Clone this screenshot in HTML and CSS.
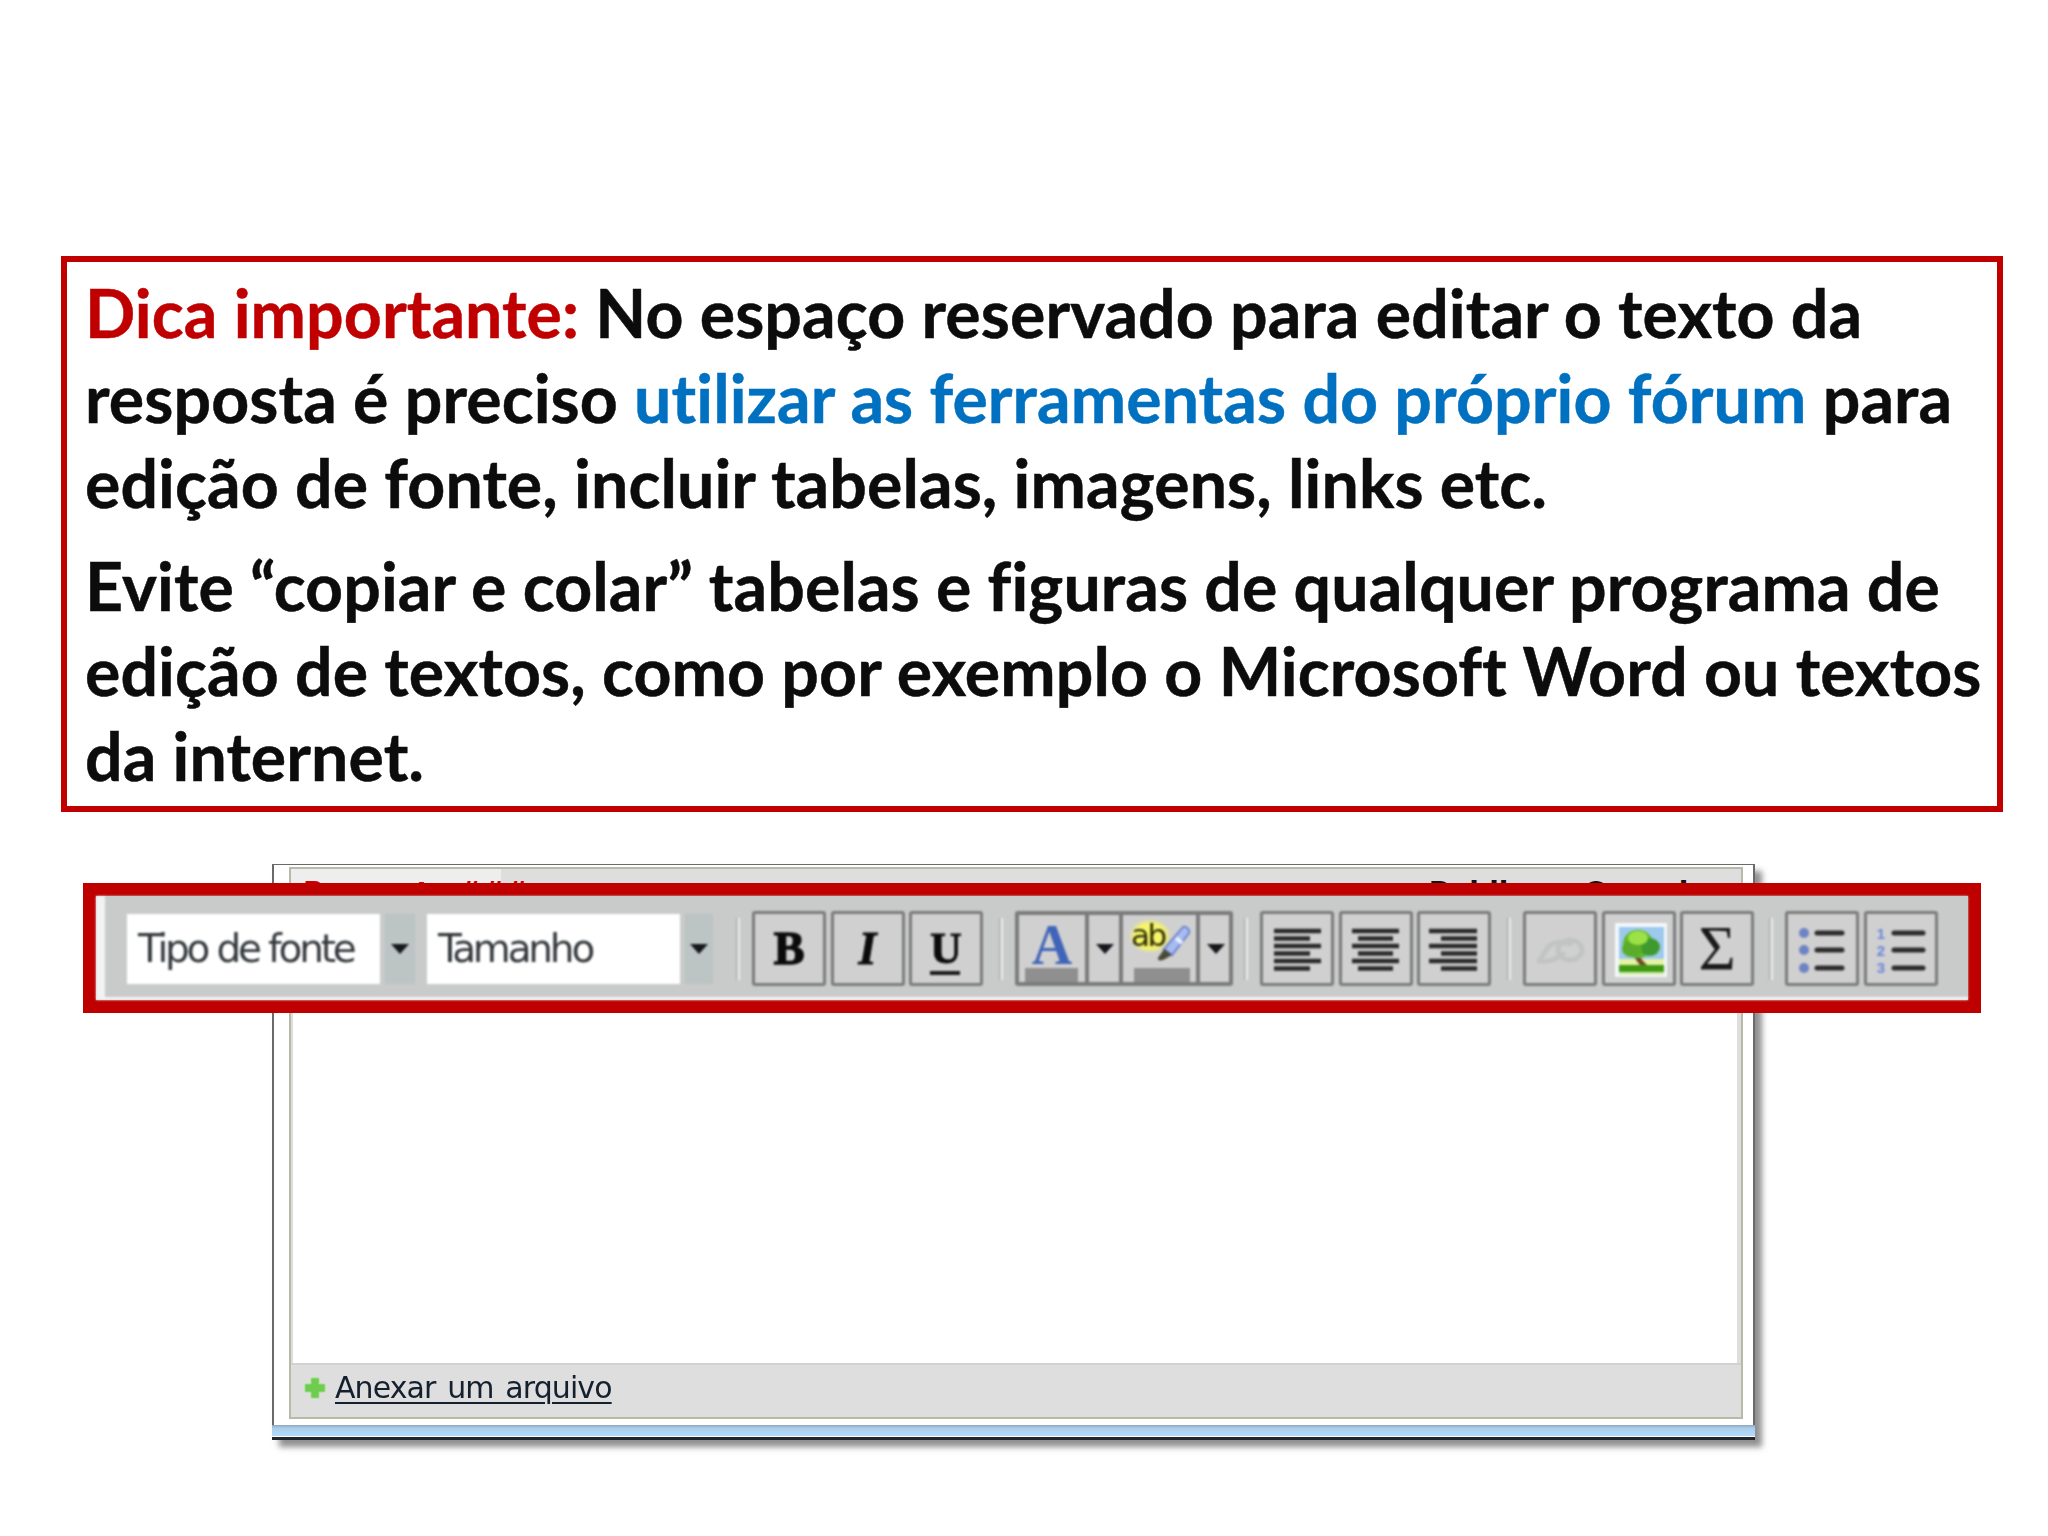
FILE: index.html
```html
<!DOCTYPE html>
<html lang="pt-BR">
<head>
<meta charset="utf-8">
<title>Dica importante</title>
<link rel="stylesheet" href="styles.css">
</head>
<body>
<main class="slide">
  <section class="callout">
    <p class="tip"><span class="red">Dica importante:</span> No espaço reservado para editar o texto da<br>resposta é preciso <span class="blue">utilizar as ferramentas do próprio fórum</span> para<br>edição de fonte, incluir tabelas, imagens, links etc.</p>
    <p class="tip">Evite “copiar e colar” tabelas e figuras de qualquer programa de<br>edição de textos, como por exemplo o Microsoft Word ou textos<br>da internet.</p>
  </section>

  <section class="demo">
    <div class="window">
      <div class="frame">
        <div class="tabs">
          <div class="tab">Resposta ###</div>
          <div class="actions"><span>Publicar</span><span>Cancelar</span></div>
        </div>
        <div class="textarea"></div>
        <div class="attach">
          <svg class="plus" viewBox="0 0 22 22"><path d="M8 1h6a1 1 0 0 1 1 1v5h5a1 1 0 0 1 1 1v6a1 1 0 0 1-1 1h-5v5a1 1 0 0 1-1 1H8a1 1 0 0 1-1-1v-5H2a1 1 0 0 1-1-1V8a1 1 0 0 1 1-1h5V2a1 1 0 0 1 1-1z" fill="#6fcc50" stroke="#9be085" stroke-width="1"/></svg>
          <a class="attach-link">Anexar um arquivo</a>
        </div>
      </div>
      <div class="statusbar"></div>
    </div>

    <div class="highlight">
      <div class="toolbar">
        <div class="combos">
          <div class="combo"><div class="field">Tipo de fonte</div><div class="drop"><i class="caret"></i></div></div>
          <div class="combo"><div class="field">Tamanho</div><div class="drop drop-narrow"><i class="caret"></i></div></div>
        </div>
        <i class="sep sep-a"></i>
        <div class="group">
          <div class="btn"><span class="glyph g-b">B</span></div>
          <div class="btn"><span class="glyph g-i">I</span></div>
          <div class="btn g-u-wrap"><span class="glyph g-u">U</span></div>
        </div>
        <i class="sep"></i>
        <div class="split">
          <div class="cell cell-a"><span class="glyph g-a">A</span><i class="swatch"></i></div>
          <div class="cell cell-drop"><i class="caret"></i></div>
          <div class="cell cell-hl">
            <span class="glow"></span><span class="g-ab">ab</span>
            <svg class="pencil" viewBox="0 0 34 40"><path d="M26 2c3-1 7 2 6 6L15 30l-8-6z" fill="#a9bcf0" stroke="#6d86d0" stroke-width="2"/><path d="M19 13l6 5" stroke="#eef2ff" stroke-width="4"/><path d="M7 24l8 6-7 4c-3 2-8 2-7-1 1-2 4-5 6-9z" fill="#4a4a3a"/></svg>
            <i class="swatch"></i>
          </div>
          <div class="cell cell-drop last"><i class="caret"></i></div>
        </div>
        <i class="sep sep-b"></i>
        <div class="group">
          <div class="btn"><svg class="ico" viewBox="0 0 74 75"><path class="ln" d="M14 20h47M14 27.500h36M14 35h47M14 42.500h36M14 50h47M14 57.500h36"/></svg></div>
          <div class="btn"><svg class="ico" viewBox="0 0 74 75"><path class="ln" d="M13 20h47M19 27.500h35M13 35h47M19 42.500h35M13 50h47M19 57.500h35"/></svg></div>
          <div class="btn"><svg class="ico" viewBox="0 0 74 75"><path class="ln" d="M12 20h48M24 27.500h36M12 35h48M24 42.500h36M12 50h48M24 57.500h36"/></svg></div>
        </div>
        <i class="sep"></i>
        <div class="group">
          <div class="btn"><svg class="ico" viewBox="0 0 74 75"><g fill="none" stroke="#c2c4c4" stroke-width="5" stroke-linecap="round"><ellipse cx="47" cy="39" rx="12" ry="10"/><path d="M16 50l9-14c5-5 13-6 22-3"/><path d="M17 50c8 1 16-1 23-7"/></g></svg></div>
          <div class="btn"><svg class="ico" viewBox="0 0 74 75">
            <rect x="13" y="12" width="52" height="54" fill="#f2f8fd"/>
            <rect x="17" y="16" width="45" height="38" fill="#9dc9ec"/>
            <rect x="17" y="48" width="45" height="7" fill="#e6f2a6"/>
            <rect x="17" y="54" width="45" height="7" fill="#3f9a12"/>
            <rect x="17" y="61" width="45" height="3" fill="#d6ecb0"/>
            <path d="M31 43l5-1c2 5 5 8 9 12h-7c-3-3-5-7-7-11z" fill="#6f4a28"/>
            <ellipse cx="36" cy="33" rx="15" ry="14" fill="#62b82a"/>
            <ellipse cx="48" cy="36" rx="10" ry="9" fill="#3f9a2e"/>
            <ellipse cx="30" cy="38" rx="10" ry="8" fill="#59ad28"/>
            <ellipse cx="36" cy="27" rx="10" ry="7" fill="#9ce246"/>
          </svg></div>
          <div class="btn"><span class="glyph g-sigma">Σ</span></div>
        </div>
        <i class="sep sep-c"></i>
        <div class="group group-lists">
          <div class="btn"><svg class="ico" viewBox="0 0 74 75"><g fill="#6d83c4"><circle cx="19" cy="22" r="5"/><circle cx="19" cy="39" r="5"/><circle cx="19" cy="57" r="5"/></g><path class="ln-thick" d="M32 22h25M32 39h25M32 57h25"/></svg></div>
          <div class="btn"><svg class="ico" viewBox="0 0 74 75"><g class="nums"><text x="17" y="28">1</text><text x="17" y="45">2</text><text x="17" y="62">3</text></g><path class="ln-thick" d="M30 22h29M30 39h29M30 57h29"/></svg></div>
        </div>
      </div>
    </div>
  </section>
</main>
</body>
</html>
```

FILE: styles.css
```css
* { box-sizing: border-box; }
html, body { margin: 0; padding: 0; background: #fff; }
body { width: 2048px; height: 1536px; overflow: hidden; }

.slide { padding: 256px 45px 0 61px; }

/* Callout */
.callout {
  width: 1942px;
  height: 556px;
  border: 6px solid #c00000;
  padding: 8px 0 0 18px;
  font-family: "Lato", "Liberation Sans", sans-serif;
  font-weight: 700;
  font-size: 66.2px;
  line-height: 85px;
  letter-spacing: .1px;
  font-variant-ligatures: none;
  color: #0c0c0c;
  white-space: nowrap;
  -webkit-text-stroke: .5px currentColor;
}
.tip { margin: 0 0 18px; }
.red { color: #c00000; }
.blue { color: #0070c0; }

/* Screenshot of the editor */
.demo {
  position: relative;
  width: 1483px;
  height: 576px;
  margin: 52px 0 0 211px;
}
.window {
  height: 576px;
  display: flex;
  flex-direction: column;
  background: #fff;
  border: 1px solid #6a6a6a;
  border-width: 1px 2px 0 2px;
  padding-top: 2px;
  box-shadow: 7px 7px 6px rgba(70, 70, 70, .6);
  filter: blur(.5px);
}
.frame {
  flex: 1;
  display: flex;
  flex-direction: column;
  margin: 0 10px 0 15px;
  border: 2px solid #b9b9a8;
  background: #dededf;
  padding: 0 4px 0 2px;
}
.tabs { display: flex; height: 60px; }
.tab {
  width: 210px;
  margin-left: -2px;
  padding: 6px 0 0 12px;
  background: #eeeeef;
  color: #cc0000;
  font: 700 28px/36px "DejaVu Sans", sans-serif;
  white-space: nowrap;
}
.actions {
  flex: 1;
  display: flex;
  gap: 26px;
  justify-content: flex-end;
  padding: 6px 16px 0 0;
  color: #111;
  font: 700 28px/36px "DejaVu Sans", sans-serif;
}
.textarea { flex: 1; background: #fff; }
.attach {
  height: 54px;
  margin: 0 -4px 0 -2px;
  padding: 0 0 6px 13px;
  display: flex;
  align-items: center;
  gap: 9px;
  border-top: 2px solid #d2d2d2;
  background: #dededf;
}
.plus { width: 22px; height: 22px; }
.attach-link {
  font: 400 30px/34px "DejaVu Sans", sans-serif;
  letter-spacing: -.9px;
  word-spacing: 3px;
  color: #15202e;
  text-decoration: underline;
  text-underline-offset: 4px;
  text-decoration-thickness: 2px;
}
.statusbar {
  flex: none;
  height: 15px;
  margin: 6px -2px 0;
  border-bottom: 3px solid #22272e;
  background: linear-gradient(#8fa6bc 0, #a9cdec 3px, #b6daf8 11px, #fff 11px);
}

/* Highlight over the editor's toolbar */
.highlight {
  position: absolute;
  left: -189px;
  top: 19px;
  width: 1898px;
  height: 130px;
  border: 13px solid #bf0000;
  background: #c9caca;
}
.toolbar {
  height: 104px;
  display: flex;
  align-items: center;
  padding: 4px 0 0 22px;
  border-left: 9px solid #f2f2f2;
  border-bottom: 3px solid #f4f4f4;
  background: #c9caca;
  filter: blur(.8px);
}
.combos { display: flex; gap: 12px; }
.combo { display: flex; height: 70px; gap: 5px; }
.field {
  width: 253px;
  background: #fff;
  padding: 0 0 0 11px;
  color: #33383c;
  font: 400 39px/70px "DejaVu Sans", sans-serif;
  letter-spacing: -3.2px;
  white-space: nowrap;
}
.drop {
  width: 30px;
  display: flex;
  align-items: center;
  justify-content: center;
  background: #bcc4c4;
}
.drop-narrow { width: 28px; }
.caret {
  display: block;
  width: 0;
  height: 0;
  border-style: solid;
  border-width: 10px 9px 0;
  border-color: #16181c transparent transparent;
}
.sep {
  flex: none;
  width: 4px;
  height: 62px;
  margin: 0 12px 0 16px;
  background: linear-gradient(90deg, #a9a9a9 0, #a9a9a9 1px, #ececec 2px, #ececec 100%);
}
.sep-a { margin-left: 23px; }
.sep-b { margin-left: 11px; }
.sep-c { margin-left: 15px; }
.group { display: flex; gap: 4.5px; }
.group-lists { gap: 5px; }
.btn {
  position: relative;
  width: 74px;
  height: 75px;
  display: flex;
  align-items: center;
  justify-content: center;
  border: 3px solid #7b7b7b;
  border-radius: 3px;
  background: #d0d0d0;
}
.ico { position: absolute; left: -3px; top: -3px; width: 74px; height: 75px; }
.ln { stroke: #2a2a2a; stroke-width: 4.500px; fill: none; }
.ln-thick { stroke: #2c2c2c; stroke-width: 5px; fill: none; stroke-linecap: round; }
.nums text { font: 700 15px "Liberation Sans", sans-serif; fill: #6a86dc; text-anchor: middle; }

.glyph { font-family: "Liberation Serif", serif; font-weight: 700; color: #0b0b0b; line-height: 1; }
.g-b { font-size: 46px; -webkit-text-stroke: 1.500px #0b0b0b; }
.g-i { font-size: 46px; font-style: italic; -webkit-text-stroke: 1px #0b0b0b; }
.g-u { font-size: 44px; -webkit-text-stroke: .8px #0b0b0b; }
.g-u-wrap::after {
  content: "";
  position: absolute;
  left: 18px;
  right: 20px;
  top: 57px;
  height: 4px;
  background: #1a1a1a;
}
.g-sigma { font-size: 64px; font-weight: 400; color: #1a1a1a; }

.split {
  display: flex;
  width: 218px;
  height: 75px;
  border: 4px solid #7b7b7b;
  border-radius: 3px;
  background: #d0d0d0;
}
.cell {
  position: relative;
  display: flex;
  align-items: center;
  justify-content: center;
  border-right: 4px solid #7b7b7b;
}
.cell-a { width: 70px; }
.cell-hl { width: 77px; }
.cell-drop { width: 34px; padding-left: 2px; }
.cell-drop.last { border-right: 0; width: 29px; }
.g-a { font-size: 56px; color: #4064b8; position: relative; top: -4px; }
.swatch {
  position: absolute;
  left: 6px;
  right: 7px;
  bottom: 0;
  height: 14px;
  background: #8f8f8f;
}
.cell-hl .swatch { left: 11px; right: 6px; }
.glow {
  position: absolute;
  left: 6px;
  top: 4px;
  width: 42px;
  height: 34px;
  border-radius: 50%;
  background: radial-gradient(#f7f56a 50%, rgba(247, 245, 106, 0) 72%);
}
.g-ab {
  position: absolute;
  left: 8px;
  top: 3px;
  font: 400 31px/34px "DejaVu Sans", sans-serif;
  letter-spacing: -2.400px;
  color: #2f2f06;
}
.pencil { position: absolute; left: 34px; top: 10px; width: 34px; height: 40px; }
```
